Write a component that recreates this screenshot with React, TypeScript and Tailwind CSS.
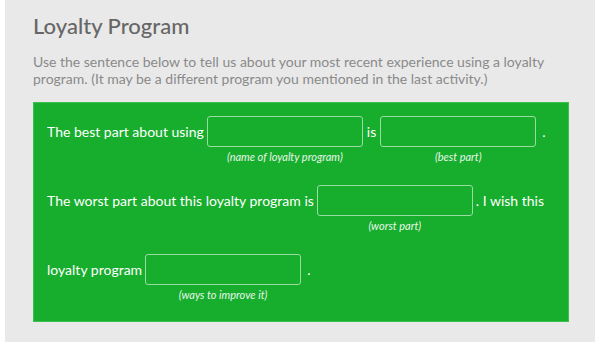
import React from 'react';

const Field = ({ label }: { label: string }) => (
  <span className="flex w-[156px] flex-col items-center">
    <input
      type="text"
      className="h-[31px] w-full rounded-[3px] border border-[#9bdca3] bg-transparent outline-none"
    />
    <span className="mt-[3px] text-[11px] italic leading-[13px] text-[#e6f6e8]">{label}</span>
  </span>
);

export default function App() {
  return (
    <div className="min-h-[347px] bg-white font-['Lato',sans-serif]">
      <div className="mx-[5px] h-[342px] bg-[#e9e9e9] px-[28px] pt-[12px]">
        <h1 className="text-[22px] leading-[28px] font-medium text-[#666666]">Loyalty Program</h1>
        <p className="mt-[13px] text-[14px] leading-[17px] text-[#8a8a8a]">
          Use the sentence below to tell us about your most recent experience using a loyalty program. (It may be a
          different program you mentioned in the last activity.)
        </p>

        <div className="mt-[15px] h-[220px] w-[536px] border border-[#3cbf4e] bg-[#17ad2d] pl-[13px] pt-[13px] text-[14px] text-white">
          <div className="flex h-[69px] items-start gap-[3px]">
            <span className="leading-[31px]">The best part about using</span>
            <Field label="(name of loyalty program)" />
            <span className="px-[1px] leading-[31px]">is</span>
            <Field label="(best part)" />
            <span className="pl-[3px] leading-[31px]">.</span>
          </div>

          <div className="flex h-[69px] items-start gap-[3px]">
            <span className="leading-[31px]">The worst part about this loyalty program is</span>
            <Field label="(worst part)" />
            <span className="leading-[31px]">. I wish this</span>
          </div>

          <div className="flex h-[69px] items-start gap-[3px]">
            <span className="leading-[31px]">loyalty program</span>
            <Field label="(ways to improve it)" />
            <span className="pl-[3px] leading-[31px]">.</span>
          </div>
        </div>
      </div>
    </div>
  );
}
